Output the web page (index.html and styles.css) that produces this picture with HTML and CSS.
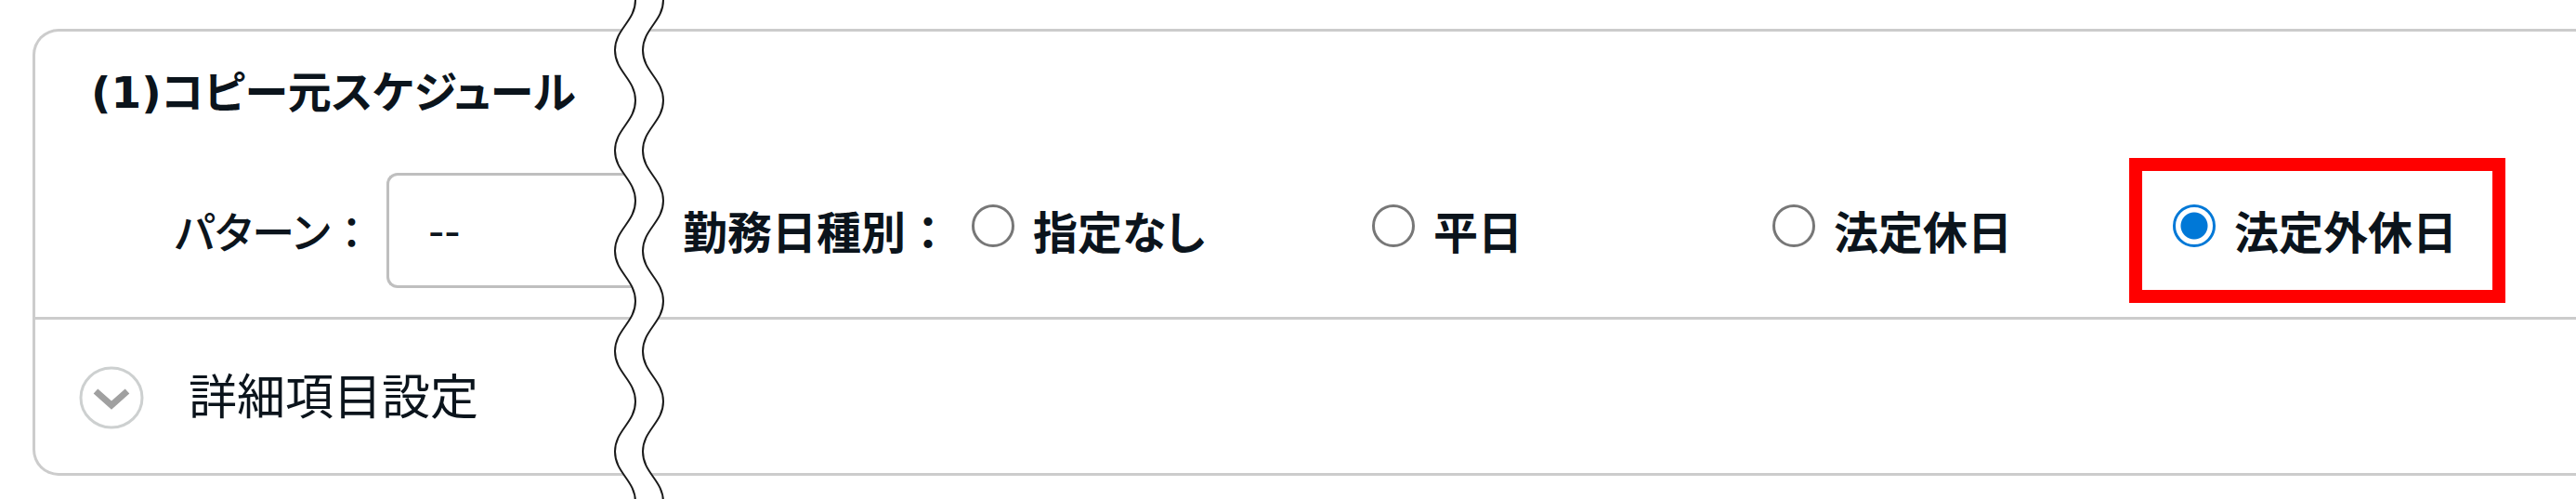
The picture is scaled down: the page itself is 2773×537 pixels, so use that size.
FILE: index.html
```html
<!DOCTYPE html>
<html lang="ja">
<head>
<meta charset="utf-8">
<title>コピー元スケジュール</title>
<link rel="stylesheet" href="styles.css">
</head>
<body>
<main class="page">
  <section class="card">
    <div class="card-main">
      <h2 class="card-title">(1)コピー元スケジュール</h2>
      <div class="fields">
        <div class="pattern">
          <label class="label" for="pattern">パターン<span class="colon">：</span></label>
          <select class="select" id="pattern"><option>--</option></select>
        </div>
        <div class="daytype" role="radiogroup" aria-labelledby="daytype-label">
          <span class="label" id="daytype-label">勤務日種別<span class="colon">：</span></span>
          <div class="options">
            <label class="option"><input class="radio" type="radio" name="daytype"><span class="option-text">指定なし</span></label>
            <label class="option"><input class="radio" type="radio" name="daytype"><span class="option-text">平日</span></label>
            <label class="option"><input class="radio" type="radio" name="daytype"><span class="option-text">法定休日</span></label>
            <label class="option option-marked"><input class="radio" type="radio" name="daytype" checked><span class="option-text">法定外休日</span></label>
          </div>
        </div>
      </div>
    </div>
    <div class="details">
      <button class="toggle" type="button">
        <svg class="toggle-icon" viewBox="0 0 70 68" aria-hidden="true">
          <ellipse cx="35" cy="34" rx="33" ry="32" fill="#fff" stroke="#cdd0d0" stroke-width="3"/>
          <path d="M18 27 L35 42 L52 27" fill="none" stroke="#a0a0a0" stroke-width="7"/>
        </svg>
        <span>詳細項目設定</span>
      </button>
    </div>
  </section>
  <svg class="tear" aria-hidden="true">
    <defs>
      <pattern id="wave" width="54" height="108" patternUnits="userSpaceOnUse">
        <path d="M23 0C23 23 1 31 1 54S23 85 23 108H53C53 85 31 77 31 54S53 23 53 0Z" fill="#fff"/>
        <path d="M23 -1V0C23 23 1 31 1 54S23 85 23 108V109M53 -1V0C53 23 31 31 31 54S53 85 53 108V109" fill="none" stroke="#1a1a1a" stroke-width="2"/>
      </pattern>
    </defs>
    <rect width="54" height="100%" fill="url(#wave)"/>
  </svg>
</main>
</body>
</html>
```
FILE: styles.css
```css
* {
  box-sizing: border-box;
}

body {
  margin: 0;
  background: #fff;
  color: #0b141c;
  font-family: "DejaVu Sans", "Noto Sans CJK JP", sans-serif;
  font-size: 48px;
  line-height: 60px;
  font-feature-settings: "palt";
}

.page {
  position: relative;
  min-height: 100vh;
  padding: 31px 0 24px 35px;
  overflow: hidden;
}

.card {
  border: 3px solid #ccc;
  border-right: 0;
  border-radius: 28px 0 0 28px;
}

.card-main {
  padding: 36px 0 15px 60px;
  border-bottom: 3px solid #ccc;
}

.card-title {
  margin: 0 0 40px;
  font-size: 47px;
  font-weight: 700;
  line-height: 60px;
}

.fields {
  display: flex;
  align-items: center;
}

.pattern {
  display: flex;
  align-items: center;
  width: 592px;
}

.label {
  display: flex;
  align-items: center;
  padding-top: 6px;
  font-weight: 700;
  white-space: nowrap;
}

.pattern .label {
  flex: 1;
  padding-left: 90px;
  font-size: 46px;
  font-weight: 500;
}

.colon {
  width: 48px;
  font-feature-settings: normal;
  text-align: center;
}

.pattern .colon {
  width: 40px;
}

.select {
  width: 274px;
  height: 124px;
  padding: 0 0 0 42px;
  border: 3px solid #bfbfbf;
  border-right: 0;
  border-radius: 12px 0 0 12px;
  background: #fff;
  color: inherit;
  font: inherit;
  appearance: none;
}

.daytype {
  display: flex;
  align-items: center;
  padding-left: 45px;
}

.daytype > .label {
  width: 264px;
}

.options {
  display: grid;
  grid-template-columns: repeat(4, 431px);
  align-items: center;
}

.option {
  display: flex;
  align-items: center;
  gap: 20px;
  justify-self: start;
  height: 156px;
  padding: 0 38px 0 33px;
  border: 14px solid transparent;
  font-weight: 700;
  white-space: nowrap;
}

.option-marked {
  border-color: #f00;
}

.option-text {
  padding-top: 6px;
}

.radio {
  width: 46px;
  height: 46px;
  margin: 0 0 10px;
  border: 3px solid #777;
  border-radius: 50%;
  background: #fff;
  appearance: none;
}

.radio:checked {
  border-color: #0078d7;
  background: radial-gradient(circle, #0078d7 14px, #fff 15px);
}

.details {
  padding: 50px 0 47px 47px;
}

.toggle {
  display: flex;
  align-items: center;
  gap: 48px;
  padding: 0;
  border: 0;
  background: none;
  color: inherit;
  font: inherit;
  font-size: 52px;
}

.toggle-icon {
  width: 70px;
  height: 68px;
}

.tear {
  position: absolute;
  top: 0;
  left: 661px;
  width: 54px;
  height: 100%;
}
```
